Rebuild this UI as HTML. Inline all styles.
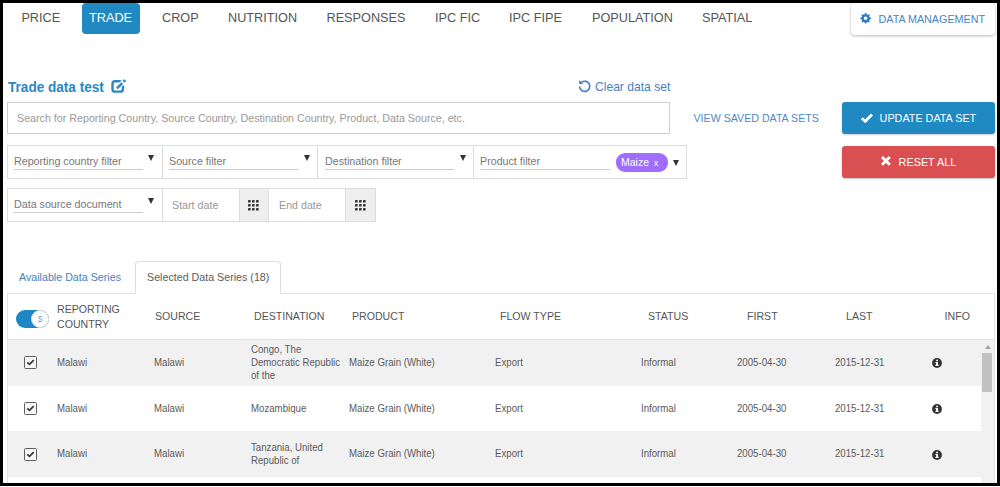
<!DOCTYPE html>
<html><head><meta charset="utf-8">
<style>
*{box-sizing:border-box;margin:0;padding:0}
html,body{width:1000px;height:487px;overflow:hidden;background:#fff}
body{position:relative;font-family:"Liberation Sans",sans-serif;color:#555}
.a{position:absolute;white-space:nowrap;line-height:1}
.nav{font-size:12.7px;color:#555;top:12px}
#frame{position:absolute;left:0;top:0;width:1000px;height:486px;border:3px solid #000;z-index:50;pointer-events:none}
.tradebtn{position:absolute;left:82px;top:3px;width:57.5px;height:30.5px;background:#2189c2;border-radius:4px}
.dm{position:absolute;left:851px;top:3px;width:144px;height:32px;background:#fff;border-radius:4px;box-shadow:0 1px 3px rgba(0,0,0,.28)}
.box{position:absolute;border:1px solid #ccc;background:#fff}
.cell{position:absolute;border-left:1px solid #ddd}
.ul{position:absolute;height:1px;background:#ccc}
.ph{font-size:10.7px;color:#777}
.arr{position:absolute;width:0;height:0;border-left:3.6px solid transparent;border-right:3.6px solid transparent;border-top:6.8px solid #333}
.hdr{font-size:10.6px;color:#555}
.row{position:absolute;left:8px;width:973px;height:45.9px}
.td{font-size:10px;color:#5a5a5a;transform:scaleX(.965);transform-origin:0 0}
.cb{position:absolute;width:12.8px;height:12.6px;border:1.1px solid #5f5f5f;border-radius:1.5px;background:#f6f6f6}
</style></head><body>
<div id="frame"></div>

<!-- NAV -->
<div class="tradebtn"></div>
<div class="a nav" style="left:21.4px">PRICE</div>
<div class="a nav" style="left:89px;color:#fff">TRADE</div>
<div class="a nav" style="left:162px">CROP</div>
<div class="a nav" style="left:228px">NUTRITION</div>
<div class="a nav" style="left:326.5px">RESPONSES</div>
<div class="a nav" style="left:435px">IPC FIC</div>
<div class="a nav" style="left:509px">IPC FIPE</div>
<div class="a nav" style="left:592px">POPULATION</div>
<div class="a nav" style="left:702px">SPATIAL</div>

<div class="dm"></div>
<svg class="a" style="left:858px;top:11px" width="15" height="15" viewBox="0 0 15 15">
<g transform="translate(7.65,7.3)" fill="#2f7cc0" fill-rule="evenodd">
<path d="M-1.39,-3.59 L-0.58,-5.27 L0.58,-5.27 L1.39,-3.59 L1.55,-3.52 L3.31,-4.14 L4.14,-3.31 L3.52,-1.55 L3.59,-1.39 L5.27,-0.58 L5.27,0.58 L3.59,1.39 L3.52,1.55 L4.14,3.31 L3.31,4.14 L1.55,3.52 L1.39,3.59 L0.58,5.27 L-0.58,5.27 L-1.39,3.59 L-1.55,3.52 L-3.31,4.14 L-4.14,3.31 L-3.52,1.55 L-3.59,1.39 L-5.27,0.58 L-5.27,-0.58 L-3.59,-1.39 L-3.52,-1.55 L-4.14,-3.31 L-3.31,-4.14 L-1.55,-3.52 Z M1.8,0 A1.8,1.8 0 1 0 -1.8,0 A1.8,1.8 0 1 0 1.8,0 Z"/>
</g></svg>
<div class="a" style="left:878.5px;top:14px;font-size:10.75px;color:#4a85c0">DATA MANAGEMENT</div>

<!-- TITLE -->
<div class="a" style="left:8px;top:79.6px;font-size:14px;font-weight:bold;color:#2a88c5;transform:scaleX(.97);transform-origin:0 0">Trade data test</div>
<svg class="a" style="left:110px;top:78px" width="17" height="16" viewBox="0 0 17 16">
<path d="M11.2,3.3 H5 Q2.5,3.3 2.5,5.8 V11.2 Q2.5,13.65 5,13.65 H10.5 Q12.9,13.65 12.9,11.2 V7.2" fill="none" stroke="#2a88c5" stroke-width="2.4"/>
<path d="M6.6,10.7 L14,3.3" stroke="#fff" stroke-width="4.6"/>
<path d="M6.9,10.4 L12.2,5.1" stroke="#2a88c5" stroke-width="2.5"/>
<circle cx="14.4" cy="3" r="1.4" fill="#2a88c5"/>
</svg>

<svg class="a" style="left:577px;top:79px" width="15" height="15" viewBox="0 0 15 15">
<path d="M2.6,7.4 A5.1,5.1 0 1 0 4.6,3.3" fill="none" stroke="#4581c0" stroke-width="1.7"/>
<path d="M2.2,1 L2.2,5 L6.2,5 Z" fill="#4581c0"/>
</svg>
<div class="a" style="left:595px;top:80.6px;font-size:12.1px;color:#4581c0">Clear data set</div>

<!-- SEARCH -->
<div class="box" style="left:7px;top:102px;width:663px;height:32px;border-color:#d0d0d0"></div>
<div class="a ph" style="left:17px;top:113px;font-size:10.7px;color:#999">Search for Reporting Country, Source Country, Destination Country, Product, Data Source, etc.</div>
<div class="a" style="left:693.5px;top:113px;font-size:10.65px;color:#5089c4">VIEW SAVED DATA SETS</div>

<div class="a" style="left:842px;top:102px;width:153px;height:32px;background:#2189c2;border-radius:3px;box-shadow:0 1px 2px rgba(0,0,0,.2)"></div>
<svg class="a" style="left:860px;top:113px" width="14" height="10" viewBox="0 0 14 10">
<path d="M1.8,5.3 L5.3,8.3 L12,1.4" fill="none" stroke="#fff" stroke-width="2.8"/>
</svg>
<div class="a" style="left:879.6px;top:113px;font-size:10.8px;color:#fff">UPDATE DATA SET</div>

<div class="a" style="left:842px;top:145.5px;width:153px;height:32.5px;background:#da5052;border-radius:3px;box-shadow:0 1px 2px rgba(0,0,0,.25)"></div>
<svg class="a" style="left:880px;top:155px" width="12" height="12" viewBox="0 0 12 12">
<path d="M2,2 L9.8,9.8 M9.8,2 L2,9.8" fill="none" stroke="#fff" stroke-width="2.8"/>
</svg>
<div class="a" style="left:898.6px;top:156.5px;font-size:10.85px;color:#fff">RESET ALL</div>

<!-- FILTER ROW 1 -->
<div class="box" style="left:7px;top:145px;width:680px;height:34px;border-color:#ddd"></div>
<div class="cell" style="left:162px;top:146px;height:32px"></div>
<div class="cell" style="left:317px;top:146px;height:32px"></div>
<div class="cell" style="left:473px;top:146px;height:32px"></div>
<div class="a ph" style="left:14px;top:155.7px">Reporting country filter</div>
<div class="ul" style="left:14px;top:169px;width:129px"></div>
<div class="arr" style="left:148px;top:154.7px"></div>
<div class="a ph" style="left:169px;top:155.7px">Source filter</div>
<div class="ul" style="left:169px;top:169px;width:130px"></div>
<div class="arr" style="left:304px;top:154.7px"></div>
<div class="a ph" style="left:325px;top:155.7px">Destination filter</div>
<div class="ul" style="left:325px;top:169px;width:129px"></div>
<div class="arr" style="left:459.5px;top:154.7px"></div>
<div class="a ph" style="left:480px;top:155.7px">Product filter</div>
<div class="ul" style="left:480px;top:169px;width:130px"></div>
<div class="a" style="left:616.4px;top:153px;width:51.6px;height:18.5px;background:#a06dfe;border-radius:9px"></div>
<div class="a" style="left:621px;top:157px;font-size:10.5px;color:#fff">Maize</div>
<div class="a" style="left:653.8px;top:159px;font-size:9px;color:#fff">x</div>
<div class="arr" style="left:673px;top:159.8px"></div>

<!-- FILTER ROW 2 -->
<div class="box" style="left:7px;top:188px;width:369px;height:34px;border-color:#ddd"></div>
<div class="cell" style="left:162px;top:189px;height:32px"></div>
<div class="a ph" style="left:14px;top:198.7px">Data source document</div>
<div class="ul" style="left:14px;top:212px;width:129px"></div>
<div class="arr" style="left:148px;top:197.5px"></div>
<div class="a ph" style="left:172px;top:200px;color:#999">Start date</div>
<div class="a" style="left:239px;top:189px;width:30px;height:32px;background:#eee;border-left:1px solid #ddd;border-right:1px solid #ddd"></div>
<div class="a ph" style="left:279px;top:200px;color:#999">End date</div>
<div class="a" style="left:345px;top:189px;width:30px;height:32px;background:#eee;border-left:1px solid #ddd"></div>

<svg class="a" style="left:248px;top:200px;z-index:4" width="11" height="11" viewBox="0 0 11 11" fill="#333"><rect x="0.0" y="0.0" width="2.6" height="2.6" rx="0.4"/><rect x="0.0" y="4.0" width="2.6" height="2.6" rx="0.4"/><rect x="0.0" y="8.0" width="2.6" height="2.6" rx="0.4"/><rect x="4.0" y="0.0" width="2.6" height="2.6" rx="0.4"/><rect x="4.0" y="4.0" width="2.6" height="2.6" rx="0.4"/><rect x="4.0" y="8.0" width="2.6" height="2.6" rx="0.4"/><rect x="8.0" y="0.0" width="2.6" height="2.6" rx="0.4"/><rect x="8.0" y="4.0" width="2.6" height="2.6" rx="0.4"/><rect x="8.0" y="8.0" width="2.6" height="2.6" rx="0.4"/></svg>
<svg class="a" style="left:355px;top:200px;z-index:4" width="11" height="11" viewBox="0 0 11 11" fill="#333"><rect x="0.0" y="0.0" width="2.6" height="2.6" rx="0.4"/><rect x="0.0" y="4.0" width="2.6" height="2.6" rx="0.4"/><rect x="0.0" y="8.0" width="2.6" height="2.6" rx="0.4"/><rect x="4.0" y="0.0" width="2.6" height="2.6" rx="0.4"/><rect x="4.0" y="4.0" width="2.6" height="2.6" rx="0.4"/><rect x="4.0" y="8.0" width="2.6" height="2.6" rx="0.4"/><rect x="8.0" y="0.0" width="2.6" height="2.6" rx="0.4"/><rect x="8.0" y="4.0" width="2.6" height="2.6" rx="0.4"/><rect x="8.0" y="8.0" width="2.6" height="2.6" rx="0.4"/></svg>
<!-- TABS -->
<div class="a" style="left:19px;top:272.4px;font-size:10.7px;color:#4482c2">Available Data Series</div>
<div class="a" style="left:135px;top:261px;width:146px;height:33px;border:1px solid #ddd;border-bottom:none;border-radius:4px 4px 0 0;background:#fff;z-index:2"></div>
<div class="a" style="left:147px;top:272.4px;font-size:10.7px;color:#5c5c5c;z-index:3">Selected Data Series (18)</div>

<!-- PANEL -->
<div class="a" style="left:7px;top:293px;width:988px;height:200px;border:1px solid #e3e3e3;background:#fff;z-index:1"></div>
<div style="position:absolute;left:8px;top:339px;width:986px;height:1px;background:#ddd;z-index:2"></div>

<div style="position:absolute;left:0;top:0;z-index:3">
<div class="a hdr" style="left:57px;top:304px">REPORTING</div>
<div class="a hdr" style="left:57px;top:319px">COUNTRY</div>
<div class="a hdr" style="left:155px;top:311px">SOURCE</div>
<div class="a hdr" style="left:254px;top:311px">DESTINATION</div>
<div class="a hdr" style="left:352px;top:311px">PRODUCT</div>
<div class="a hdr" style="left:500px;top:311px">FLOW TYPE</div>
<div class="a hdr" style="left:648px;top:311px">STATUS</div>
<div class="a hdr" style="left:747px;top:311px">FIRST</div>
<div class="a hdr" style="left:846px;top:311px">LAST</div>
<div class="a hdr" style="left:944.6px;top:311px">INFO</div>
</div>


<div style="position:absolute;left:0;top:0;z-index:3">
<div class="row" style="top:339.4px;height:46.3px;background:#f1f1f1">
<div class="cb" style="left:16px;top:17px"><svg width="11" height="11" viewBox="0 0 11 11" style="position:absolute;left:0;top:0"><path d="M2.3,5.3 L4.5,7.4 L8.7,3.1" fill="none" stroke="#333" stroke-width="1.6"/></svg></div>
<div class="a td" style="left:48.5px;top:18.30px">Malawi</div>
<div class="a td" style="left:145.8px;top:18.30px">Malawi</div>
<div class="a td" style="left:243.0px;top:6.05px">Congo, The</div>
<div class="a td" style="left:243.0px;top:18.80px">Democratic Republic</div>
<div class="a td" style="left:243.0px;top:31.55px">of the</div>
<div class="a td" style="left:340.5px;top:18.30px">Maize Grain (White)</div>
<div class="a td" style="left:486.5px;top:18.30px">Export</div>
<div class="a td" style="left:632.5px;top:18.30px">Informal</div>
<div class="a td" style="left:729.3px;top:18.30px">2005-04-30</div>
<div class="a td" style="left:826.5px;top:18.30px">2015-12-31</div>
<svg class="a" style="left:923px;top:18px" width="12" height="12" viewBox="0 0 12 12"><circle cx="6" cy="6" r="4.9" fill="#333"/><rect x="5.1" y="5" width="1.9" height="3.7" fill="#fff"/><rect x="4.3" y="7.8" width="3.5" height="1" fill="#fff"/><rect x="4.3" y="5" width="1.5" height="0.9" fill="#fff"/><circle cx="6.05" cy="3.4" r="0.95" fill="#fff"/></svg>
</div>
<div class="row" style="top:385.6px;height:45.6px;background:#fff">
<div class="cb" style="left:16px;top:16.7px"><svg width="11" height="11" viewBox="0 0 11 11" style="position:absolute;left:0;top:0"><path d="M2.3,5.3 L4.5,7.4 L8.7,3.1" fill="none" stroke="#333" stroke-width="1.6"/></svg></div>
<div class="a td" style="left:48.5px;top:18.00px">Malawi</div>
<div class="a td" style="left:145.8px;top:18.00px">Malawi</div>
<div class="a td" style="left:243.0px;top:18.00px">Mozambique</div>
<div class="a td" style="left:340.5px;top:18.00px">Maize Grain (White)</div>
<div class="a td" style="left:486.5px;top:18.00px">Export</div>
<div class="a td" style="left:632.5px;top:18.00px">Informal</div>
<div class="a td" style="left:729.3px;top:18.00px">2005-04-30</div>
<div class="a td" style="left:826.5px;top:18.00px">2015-12-31</div>
<svg class="a" style="left:923px;top:17.7px" width="12" height="12" viewBox="0 0 12 12"><circle cx="6" cy="6" r="4.9" fill="#333"/><rect x="5.1" y="5" width="1.9" height="3.7" fill="#fff"/><rect x="4.3" y="7.8" width="3.5" height="1" fill="#fff"/><rect x="4.3" y="5" width="1.5" height="0.9" fill="#fff"/><circle cx="6.05" cy="3.4" r="0.95" fill="#fff"/></svg>
</div>
<div class="row" style="top:431.2px;background:#f1f1f1">
<div class="cb" style="left:16px;top:17px"><svg width="11" height="11" viewBox="0 0 11 11" style="position:absolute;left:0;top:0"><path d="M2.3,5.3 L4.5,7.4 L8.7,3.1" fill="none" stroke="#333" stroke-width="1.6"/></svg></div>
<div class="a td" style="left:48.5px;top:18.30px">Malawi</div>
<div class="a td" style="left:145.8px;top:18.30px">Malawi</div>
<div class="a td" style="left:243.0px;top:11.6px">Tanzania, United</div>
<div class="a td" style="left:243.0px;top:24.85px">Republic of</div>
<div class="a td" style="left:340.5px;top:18.30px">Maize Grain (White)</div>
<div class="a td" style="left:486.5px;top:18.30px">Export</div>
<div class="a td" style="left:632.5px;top:18.30px">Informal</div>
<div class="a td" style="left:729.3px;top:18.30px">2005-04-30</div>
<div class="a td" style="left:826.5px;top:18.30px">2015-12-31</div>
<svg class="a" style="left:923px;top:18px" width="12" height="12" viewBox="0 0 12 12"><circle cx="6" cy="6" r="4.9" fill="#333"/><rect x="5.1" y="5" width="1.9" height="3.7" fill="#fff"/><rect x="4.3" y="7.8" width="3.5" height="1" fill="#fff"/><rect x="4.3" y="5" width="1.5" height="0.9" fill="#fff"/><circle cx="6.05" cy="3.4" r="0.95" fill="#fff"/></svg>
</div>
<div style="position:absolute;left:8px;top:339px;width:986px;height:1px;background:#e2e2e2;z-index:4"></div>
<!-- scrollbar -->
<div class="a" style="left:981px;top:340px;width:13px;height:146px;background:#f1f1f1"></div>
<div class="arr" style="left:984.5px;top:344.5px;border-left-width:3px;border-right-width:3px;border-top:none;border-bottom:4px solid #a3a3a3"></div>
<div class="a" style="left:982.3px;top:353px;width:9.6px;height:39.2px;background:#c1c1c1"></div>
<!-- toggle -->
<div class="a" style="left:16px;top:310px;width:33px;height:18px;background:#1f86c4;border-radius:9px"></div>
<div class="a" style="left:31px;top:310px;width:18px;height:18px;background:#fff;border:1px solid #e0e0e0;border-radius:50%"></div>
<div class="a" style="left:38.3px;top:314.6px;font-size:9px;color:#3a86c8;transform:scaleX(.72);transform-origin:0 0">S</div>
</div>
</body></html>
